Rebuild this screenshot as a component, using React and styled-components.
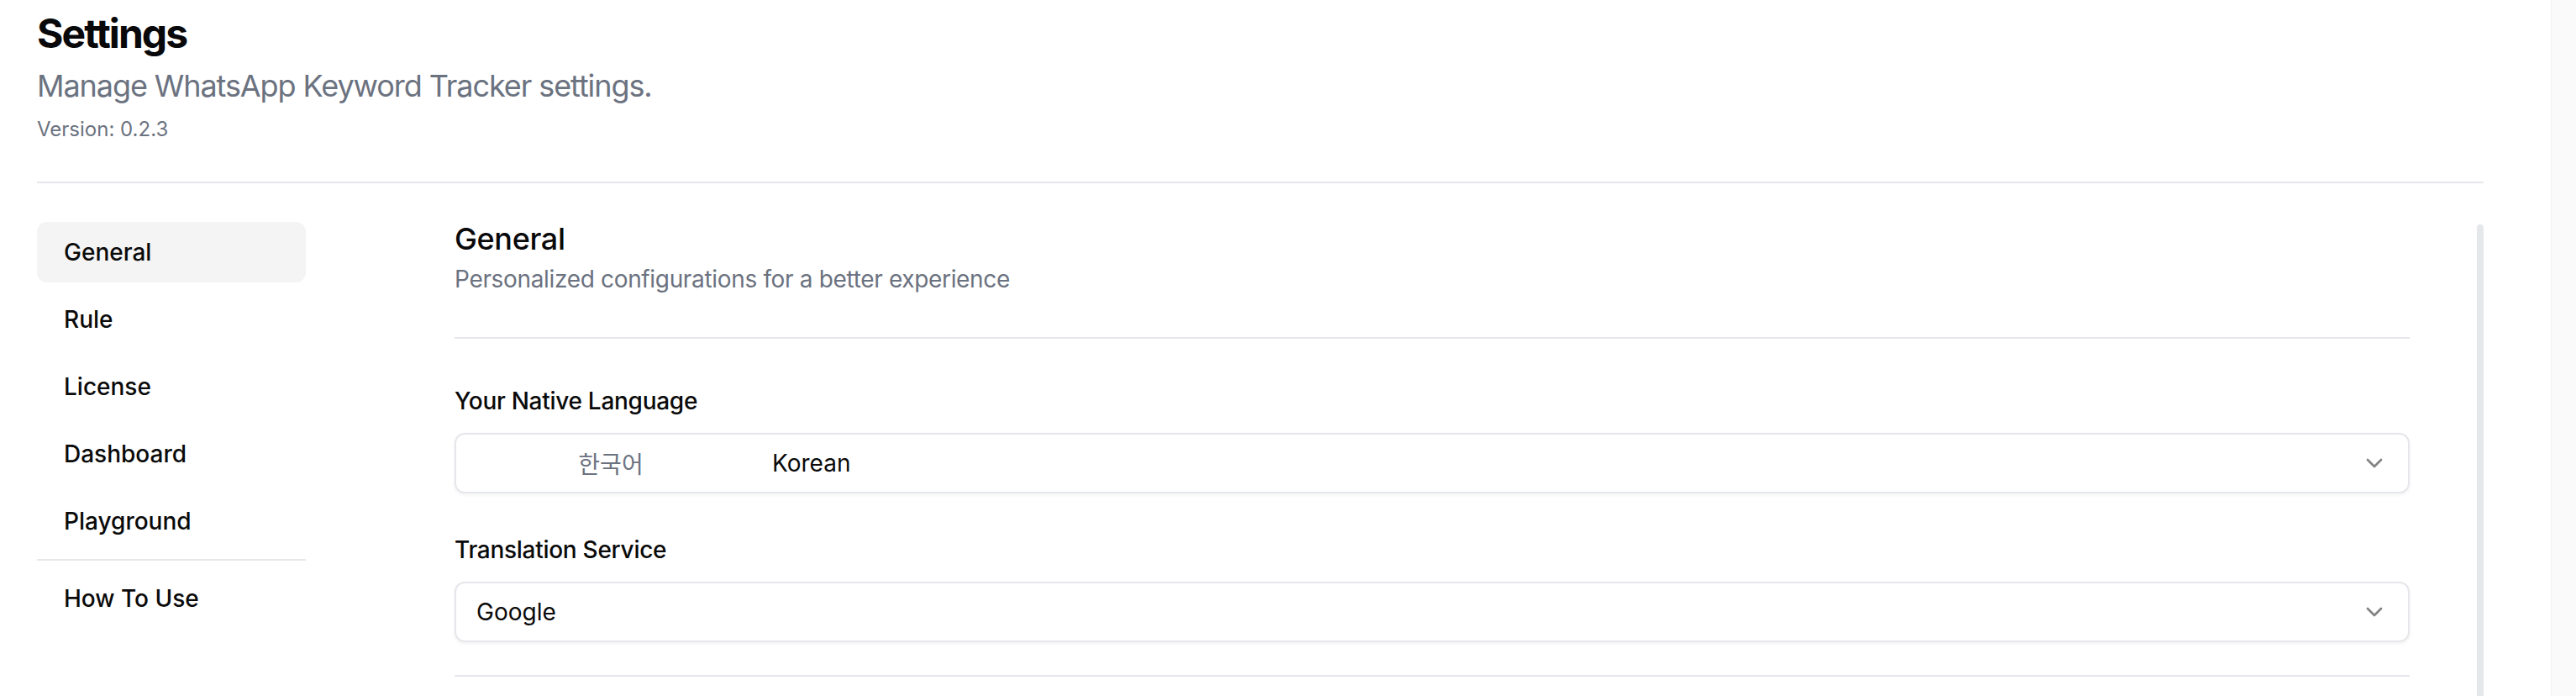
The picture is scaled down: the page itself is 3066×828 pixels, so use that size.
import React from 'react'
import styled, { createGlobalStyle } from 'styled-components';
import { ChevronDown } from 'lucide-react';

const GlobalStyle = createGlobalStyle`
html, body {
  margin: 0;
  padding: 0;
  background: #ffffff;
  overflow: hidden;
}
body {
  font-family: Inter, "Noto Sans CJK KR", sans-serif;
  color: #0a0a0a;
  -webkit-font-smoothing: antialiased;
}
`;

const Page = styled.div`
display: flex;
height: 828px;`;

const Main = styled.div`
flex: 1;
padding: 8px 80px 0 44px;
min-width: 0;`;

const PageTrack = styled.div`
width: 29px;
background: #fafafa;
border-left: 1px solid #f1f1f1;`;

const Title = styled.h2`
margin: 0;
font-size: 48px;
line-height: 64px;
font-weight: 700;
letter-spacing: -0.04em;
color: #09090b;`;

const Subtitle = styled.p`
margin: 2px 0 0;
font-size: 36px;
line-height: 56px;
letter-spacing: -0.03em;
color: #6b7280;`;

const Version = styled.p`
margin: 8px 0 0;
font-size: 24px;
line-height: 32px;
color: #6b7280;`;

const Divider = styled.div`
height: 2px;
background: #e5e7eb;
margin: ${({ $m }) => $m || '0'};`;

const Body = styled.div`
display: flex;
gap: 177px;`;

const Sidebar = styled.nav`
width: 320px;
flex-shrink: 0;
display: flex;
flex-direction: column;
gap: 8px;
padding-top: 8px;`;

const NavItem = styled.div`
height: 72px;
box-sizing: border-box;
padding: 16px 32px;
border-radius: 12px;
font-size: 28px;
line-height: 40px;
font-weight: 500;
color: #0a0a0a;
background: ${({ $active }) => ($active ? '#f4f4f5' : 'transparent')};`;

const ScrollArea = styled.div`
flex: 1;
display: flex;
min-width: 0;`;

const Content = styled.div`
flex: 1;
min-width: 0;`;

const ScrollTrack = styled.div`
width: 8px;
margin-left: 80px;
padding-top: 11px;`;

const Thumb = styled.div`
height: 700px;
background: #e5e7eb;
border-radius: 4px 4px 0 0;`;

const SectionTitle = styled.h3`
margin: 0;
font-size: 36px;
line-height: 56px;
font-weight: 500;
letter-spacing: -0.01em;
color: #09090b;`;

const SectionText = styled.p`
margin: 0;
font-size: 28px;
line-height: 40px;
letter-spacing: -0.012em;
color: #6b7280;`;

const Form = styled.div`
display: flex;
flex-direction: column;
gap: 47px;
padding-top: 54px;`;

const Field = styled.div`
display: flex;
flex-direction: column;
gap: 18px;`;

const Label = styled.label`
font-size: 28px;
line-height: 40px;
font-weight: 500;
letter-spacing: -0.01em;
color: #0a0a0a;`;

const Select = styled.div`
height: 72px;
box-sizing: border-box;
display: flex;
align-items: center;
justify-content: space-between;
padding: 0 24px;
border: 2px solid #e5e7eb;
border-radius: 12px;
background: #ffffff;
box-shadow: 0 2px 4px rgba(0, 0, 0, 0.05);
font-size: 28px;
line-height: 40px;
color: #0a0a0a;`;

const Value = styled.div`
display: flex;
align-items: center;`;

const Native = styled.span`
width: 320px;
text-align: center;
color: #6b7280;
font-family: "Noto Sans CJK KR", Inter, sans-serif;`;

const English = styled.span`
margin-left: 32px;`;

const Chevron = styled(ChevronDown)`
opacity: 0.5;
flex-shrink: 0;`;

const navItems = ['General', 'Rule', 'License', 'Dashboard', 'Playground'];

const App = () => {
  return (
    <Page>
      <GlobalStyle />
      <Main>
        <Title>Settings</Title>
        <Subtitle>Manage WhatsApp Keyword Tracker settings.</Subtitle>
        <Version>Version: 0.2.3</Version>
        <Divider $m="46px 0 38px" />
        <Body>
          <Sidebar>
            {navItems.map((item) => (
              <NavItem key={item} $active={item === 'General'}>{item}</NavItem>
            ))}
            <Divider $m="1px 0" />
            <NavItem>How To Use</NavItem>
          </Sidebar>
          <ScrollArea>
            <Content>
              <SectionTitle>General</SectionTitle>
              <SectionText>Personalized configurations for a better experience</SectionText>
              <Divider $m="49px 0 0" />
              <Form>
                <Field>
                  <Label>Your Native Language</Label>
                  <Select>
                    <Value>
                      <Native>한국어</Native>
                      <English>Korean</English>
                    </Value>
                    <Chevron size={32} />
                  </Select>
                </Field>
                <Field>
                  <Label>Translation Service</Label>
                  <Select>
                    <Value>Google</Value>
                    <Chevron size={32} />
                  </Select>
                </Field>
              </Form>
              <Divider $m="39px 0 0" />
            </Content>
            <ScrollTrack>
              <Thumb />
            </ScrollTrack>
          </ScrollArea>
        </Body>
      </Main>
      <PageTrack />
    </Page>
  )
}

export default App
